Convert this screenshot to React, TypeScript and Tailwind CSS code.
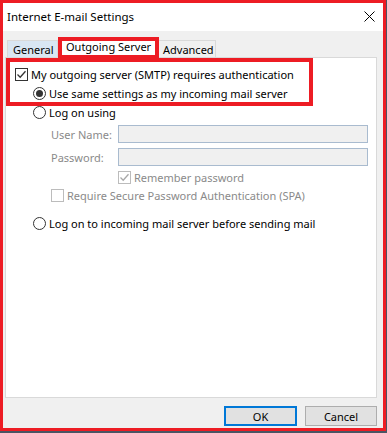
import React from "react";

const RED = "border-[#ed1c24]";

function CheckBox({ checked, disabled }: { checked?: boolean; disabled?: boolean }) {
  return (
    <div
      className={
        "w-[13px] h-[13px] shrink-0 border flex items-center justify-center " +
        (disabled ? "border-[#bcbcbc] bg-white" : "border-[#333333] bg-white")
      }
    >
      {checked && (
        <svg width="11" height="11" viewBox="0 0 11 11">
          <path
            d="M1.5 5.5 L4.2 8.2 L9.5 2.2"
            fill="none"
            stroke={disabled ? "#a8a8a8" : "#333333"}
            strokeWidth="1.3"
          />
        </svg>
      )}
    </div>
  );
}

function Radio({ selected }: { selected?: boolean }) {
  return (
    <div className="w-[13px] h-[13px] shrink-0 rounded-full border border-[#333333] bg-white flex items-center justify-center">
      {selected && <div className="w-[7px] h-[7px] rounded-full bg-[#333333]" />}
    </div>
  );
}

export default function App() {
  return (
    <div
      className="w-[387px] h-[433px] bg-[#4a5563] text-[11px] text-black whitespace-nowrap"
      style={{ fontFamily: '"Noto Sans", sans-serif' }}
    >
      <div className={"w-[386px] h-[431px] border-[3px] " + RED + " bg-[#f0f0f0] flex flex-col"}>
        {/* title bar */}
        <div className="h-[28px] bg-white flex items-center justify-between pl-[4px] pr-[8px] shrink-0">
          <span className="leading-none text-[11.5px]">Internet E-mail Settings</span>
          <svg width="11" height="11" viewBox="0 0 11 11" className="mt-[-2px]">
            <path d="M0.5 0.5 L10.5 10.5 M10.5 0.5 L0.5 10.5" stroke="#000" strokeWidth="1" />
          </svg>
        </div>

        <div className="flex flex-col pl-[2px] w-[374px]">
          {/* tabs */}
          <div className="h-[20px] mt-[6px] flex items-end pl-[2px]">
            <div className="h-[17px] w-[51px] border border-b-0 border-[#d9d9d9] bg-[#d9e6f3] flex items-center pl-[5px] leading-none">
              <span className="mt-[1px]">General</span>
            </div>
            <div className={"h-[22px] w-[101px] mb-[-2px] border-4 " + RED + " bg-white flex items-center pl-[4px] leading-none relative z-10"}>
              <span className="mt-[-3px]">Outgoing Server</span>
            </div>
            <div className="h-[17px] w-[57px] border border-b-0 border-l-0 border-[#d9d9d9] bg-[#f0f0f0] flex items-center pl-[4px] leading-none">
              <span className="mt-[1px]">Advanced</span>
            </div>
          </div>

          {/* panel */}
          <div className="h-[341px] w-[372px] border border-[#d9d9d9] bg-white flex flex-col">
            <div className={"w-[307px] h-[48px] border-4 " + RED + " flex flex-col"}>
              <div className="h-[13px] mt-[6px] pl-[5px] flex items-center gap-[3px] leading-none">
                <CheckBox checked />
                <span>My outgoing server (SMTP) requires authentication</span>
              </div>
              <div className="h-[13px] mt-[6px] pl-[23px] flex items-center gap-[3px] leading-none">
                <Radio selected />
                <span>Use same settings as my incoming mail server</span>
              </div>
            </div>

            <div className="h-[13px] pl-[27px] flex items-center gap-[3px] leading-none">
              <Radio />
              <span>Log on using</span>
            </div>

            <div className="h-[18px] mt-[6px] pl-[45px] flex items-center leading-none">
              <span className="w-[67px] text-[#8a8a8a]">User Name:</span>
              <div className="w-[250px] h-[18px] border border-[#a9bbcf] bg-[#f0f0f0]" />
            </div>
            <div className="h-[18px] mt-[5px] pl-[45px] flex items-center leading-none">
              <span className="w-[67px] text-[#8a8a8a]">Password:</span>
              <div className="w-[250px] h-[18px] border border-[#a9bbcf] bg-[#f0f0f0]" />
            </div>

            <div className="h-[13px] mt-[5px] pl-[112px] flex items-center gap-[3px] leading-none">
              <CheckBox checked disabled />
              <span className="text-[#8a8a8a]">Remember password</span>
            </div>
            <div className="h-[13px] mt-[5px] pl-[45px] flex items-center gap-[3px] leading-none">
              <CheckBox disabled />
              <span className="text-[#8a8a8a]">Require Secure Password Authentication (SPA)</span>
            </div>

            <div className="h-[13px] mt-[15px] pl-[27px] flex items-center gap-[3px] leading-none">
              <Radio />
              <span>Log on to incoming mail server before sending mail</span>
            </div>
          </div>

          {/* buttons */}
          <div className="mt-[8px] flex justify-end gap-[8px] w-[372px]">
            <button className="w-[73px] h-[20px] border-2 border-[#0078d7] bg-[#e1e1e1] leading-none">
              OK
            </button>
            <button className="w-[72px] h-[20px] border border-[#adadad] bg-[#e1e1e1] leading-none">
              Cancel
            </button>
          </div>
        </div>
      </div>
    </div>
  );
}
